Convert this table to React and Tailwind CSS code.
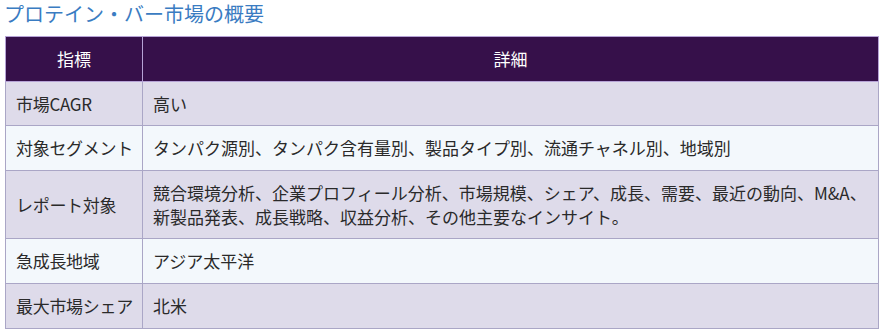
import React from "react";

const rows = [
  ["市場CAGR", "高い", "bg-[#dedbea]", "h-[44px]"],
  ["対象セグメント", "タンパク源別、タンパク含有量別、製品タイプ別、流通チャネル別、地域別", "bg-[#f3f8fc]", "h-[45px]"],
  ["レポート対象", "競合環境分析、企業プロフィール分析、市場規模、シェア、成長、需要、最近の動向、M&A、新製品発表、成長戦略、収益分析、その他主要なインサイト。", "bg-[#dedbea]", "h-[68px]"],
  ["急成長地域", "アジア太平洋", "bg-[#f3f8fc]", "h-[45px]"],
  ["最大市場シェア", "北米", "bg-[#dedbea]", "h-[45px]"],
];

export default function App() {
  return (
    <div className="w-[883px] h-[333px] bg-white overflow-hidden" style={{ fontFamily: '"Noto Sans CJK JP", "Noto Sans", sans-serif' }}>
      <h2 className="pl-[4px] pt-[1px] h-[36px] text-[20px] leading-[26px] text-[#3a7cc2] font-normal">
        プロテイン・バー市場の概要
      </h2>
      <table className="ml-[5px] w-[874px] table-fixed border-collapse text-[17px] leading-[24px] text-[#2a2a2a]">
        <colgroup>
          <col className="w-[137px]" />
          <col />
        </colgroup>
        <thead>
          <tr className="bg-[#36104a]">
            <th className="h-[45px] p-0 border border-[#b6a3d6] font-normal text-white text-center">指標</th>
            <th className="h-[45px] p-0 border border-[#b6a3d6] font-normal text-white text-center">詳細</th>
          </tr>
        </thead>
        <tbody>
          {rows.map(([k, v, bg, h], i) => (
            <tr key={i} className={bg}>
              <td className={`border border-[#aaa6c6] pl-[10px] pr-0 py-0 align-middle whitespace-nowrap tracking-[-0.3px] ${h}`}>{k}</td>
              <td className="border border-[#aaa6c6] pl-[10px] pr-[6px] py-0 align-middle">{v}</td>
            </tr>
          ))}
        </tbody>
      </table>
    </div>
  );
}
